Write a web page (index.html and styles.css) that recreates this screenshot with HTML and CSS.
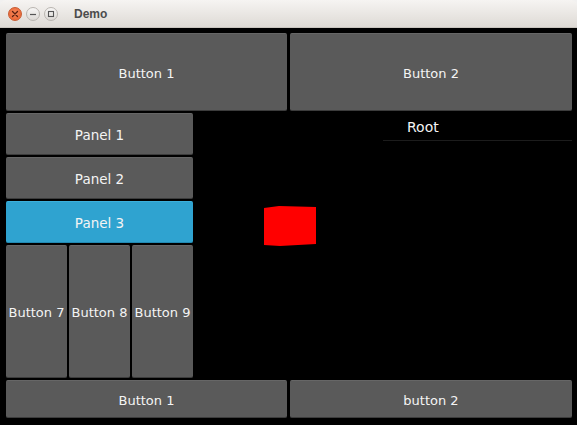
FILE: index.html
```html
<!DOCTYPE html>
<html>
<head>
<meta charset="utf-8">
<link rel="stylesheet" href="styles.css">
</head>
<body>
<div class="window">
  <div class="titlebar">
    <div class="controls">
      <span class="wbtn close"><svg width="8" height="8" viewBox="0 0 8 8"><path d="M1.5 1.5L6.5 6.5M6.5 1.5L1.5 6.5" stroke="#5a2010" stroke-width="1.3" stroke-linecap="round"/></svg></span>
      <span class="wbtn"><svg width="8" height="8" viewBox="0 0 8 8"><path d="M1 4.5H7" stroke="#555" stroke-width="1.2"/></svg></span>
      <span class="wbtn"><svg width="8" height="8" viewBox="0 0 8 8"><rect x="1.5" y="1.5" width="5" height="5" fill="none" stroke="#555" stroke-width="1.1"/></svg></span>
    </div>
    <div class="title">Demo</div>
  </div>
  <div class="content">
    <div class="row top">
      <div class="btn">Button 1</div>
      <div class="btn">Button 2</div>
    </div>
    <div class="middle">
      <div class="left">
        <div class="btn panel">Panel 1</div>
        <div class="btn panel">Panel 2</div>
        <div class="btn panel active">Panel 3</div>
        <div class="trio">
          <div class="btn">Button 7</div>
          <div class="btn">Button 8</div>
          <div class="btn">Button 9</div>
        </div>
      </div>
      <div class="canvas">
        <svg class="shape" width="54" height="44" viewBox="0 0 54 44"><polygon points="1,3 16,1 53,2 53,39 17,41 1,40" fill="#ff0000"/></svg>
        <div class="tree">
          <div class="tree-head">Root</div>
        </div>
      </div>
    </div>
    <div class="row bottom">
      <div class="btn">Button 1</div>
      <div class="btn">button 2</div>
    </div>
  </div>
</div>
</body>
</html>
```
FILE: styles.css
```css
html, body {
  margin: 0;
  padding: 0;
  background: #f2f1f0;
}
.window {
  width: 577px;
  height: 425px;
  display: flex;
  flex-direction: column;
  font-family: "DejaVu Sans", sans-serif;
}
.titlebar {
  height: 28px;
  flex: none;
  display: flex;
  align-items: center;
  background: linear-gradient(#f6f4f2, #dedad5);
  border-radius: 6px 6px 0 0;
  border-bottom: 1px solid #c9c5bf;
  box-sizing: border-box;
}
.controls {
  display: flex;
  gap: 4px;
  margin-left: 8px;
  margin-top: 1px;
}
.wbtn {
  width: 14px;
  height: 14px;
  border-radius: 50%;
  box-sizing: border-box;
  border: 1px solid #b9b5b0;
  background: linear-gradient(#f7f6f5, #dcd9d5);
  display: flex;
  align-items: center;
  justify-content: center;
}
.wbtn.close {
  border-color: #c85a30;
  background: radial-gradient(circle at 50% 40%, #f7875a, #e55d2b);
}
.title {
  margin-left: 16px;
  font-family: "Liberation Sans", sans-serif;
  font-weight: bold;
  font-size: 12px;
  color: #4c4c4c;
  margin-top: 1px;
}
.content {
  flex: 1;
  background: #000;
  padding: 5px 5px 7px 6px;
  display: flex;
  flex-direction: column;
  gap: 2px;
}
.btn {
  background: #5a5a5a;
  color: #f4f4f4;
  font-size: 13px;
  display: flex;
  align-items: center;
  justify-content: center;
  border-radius: 2px;
  box-sizing: border-box;
  border-top: 1px solid #666;
  border-bottom: 1px solid #3c3c3c;
  padding-top: 2px;
  white-space: nowrap;
}
.row {
  display: grid;
  grid-template-columns: 281px 282px;
  gap: 3px;
}
.top { height: 78px; }
.bottom { height: 38px; }
.middle {
  flex: 1;
  display: flex;
}
.left {
  width: 187px;
  display: flex;
  flex-direction: column;
  gap: 2px;
}
.panel {
  height: 42px;
  flex: none;
  font-size: 13.5px;
}
.panel.active {
  background: #2fa3d0;
  border-top-color: #3cb0dc;
  border-bottom-color: #2289b2;
}
.trio {
  flex: 1;
  display: grid;
  grid-template-columns: 61px 61px 61px;
  gap: 2px;
}
.canvas {
  flex: 1;
  position: relative;
  display: flex;
  justify-content: flex-end;
}
.shape {
  position: absolute;
  left: 70px;
  top: 92px;
}
.tree {
  width: 189px;
}
.tree-head {
  height: 28px;
  box-sizing: border-box;
  border-bottom: 1px solid #1c1c1c;
  color: #f4f4f4;
  font-size: 14px;
  padding-left: 24px;
  line-height: 29px;
}
```
